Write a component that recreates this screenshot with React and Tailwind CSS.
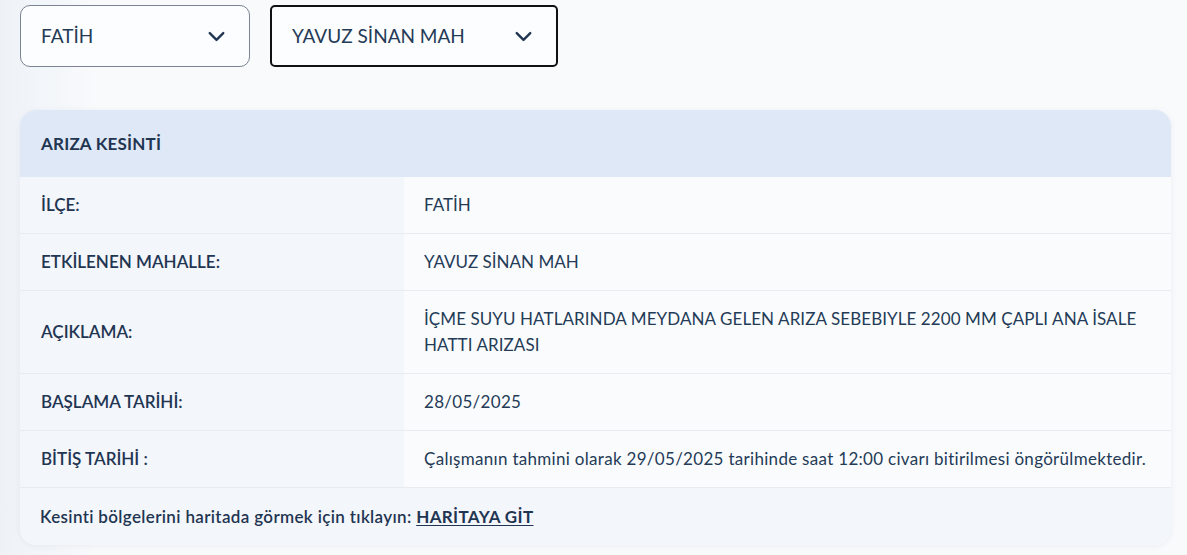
import { ChevronDown } from "lucide-react";

const rows = [
  { label: "İLÇE:", value: "FATİH" },
  { label: "ETKİLENEN MAHALLE:", value: "YAVUZ SİNAN MAH" },
  {
    label: "AÇIKLAMA:",
    value:
      "İÇME SUYU HATLARINDA MEYDANA GELEN ARIZA SEBEBIYLE 2200 MM ÇAPLI ANA İSALE HATTI ARIZASI",
    track: "tracking-[0.08px]"
  },
  { label: "BAŞLAMA TARİHİ:", value: "28/05/2025", track: "tracking-[0.3px]" },
  {
    label: "BİTİŞ TARİHİ :",
    value:
      "Çalışmanın tahmini olarak 29/05/2025 tarihinde saat 12:00 civarı bitirilmesi öngörülmektedir.",
    track: "tracking-[0.3px]"
  }
];

function Select({ value, width, focused }) {
  return (
    <div
      className={`flex h-[62px] items-center justify-between bg-[#fcfdfe] pl-5 pr-[19px] ${width} ${
        focused
          ? "rounded-[5px] border-2 border-[#111111]"
          : "rounded-[10px] border border-[#7a8494]"
      }`}
    >
      <span className="text-[19px] text-[#243b57]">{value}</span>
      <ChevronDown className="h-[27px] w-[27px] text-[#1f3552]" strokeWidth={2.1} />
    </div>
  );
}

export default function App() {
  return (
    <div className="min-h-screen bg-gradient-to-r from-[#eef2f7] via-[#f8fafc] via-[8%] to-[#f8fafc] px-5 pt-[5px] font-['Lato',sans-serif] text-[#1f3552]">
      <div className="flex gap-5">
        <Select value="FATİH" width="w-[230px]" />
        <Select value="YAVUZ SİNAN MAH" width="w-[288px]" focused />
      </div>

      <div className="mt-[43px] w-[1151px] overflow-hidden rounded-2xl bg-[#fafbfd] shadow-[0_1px_6px_rgba(30,50,80,0.06)]">
        <div className="flex h-[67px] items-center bg-[#dfe8f6] px-[21px] text-[17px] font-bold tracking-[0.2px] text-[#1f3552]">
          ARIZA KESİNTİ
        </div>
        {rows.map((row) => (
          <div
            key={row.label}
            className="flex min-h-[57px] border-b border-[#e8ecf1] text-[17px]"
          >
            <div className="flex w-[384px] shrink-0 items-center bg-[#f3f6fa] px-[21px] font-semibold">
              {row.label}
            </div>
            <div
              className={`flex flex-1 items-center py-[15px] pl-5 pr-6 leading-[26px] text-[#243b57] ${row.track || ""}`}
            >
              {row.value}
            </div>
          </div>
        ))}
        <div className="flex h-[57px] items-center bg-[#f3f6fa] px-5 text-[17px] font-semibold tracking-[0.35px]">
          Kesinti bölgelerini haritada görmek için tıklayın:&nbsp;
          <a href="#" className="font-bold underline underline-offset-2">
            HARİTAYA GİT
          </a>
        </div>
      </div>
    </div>
  );
}
